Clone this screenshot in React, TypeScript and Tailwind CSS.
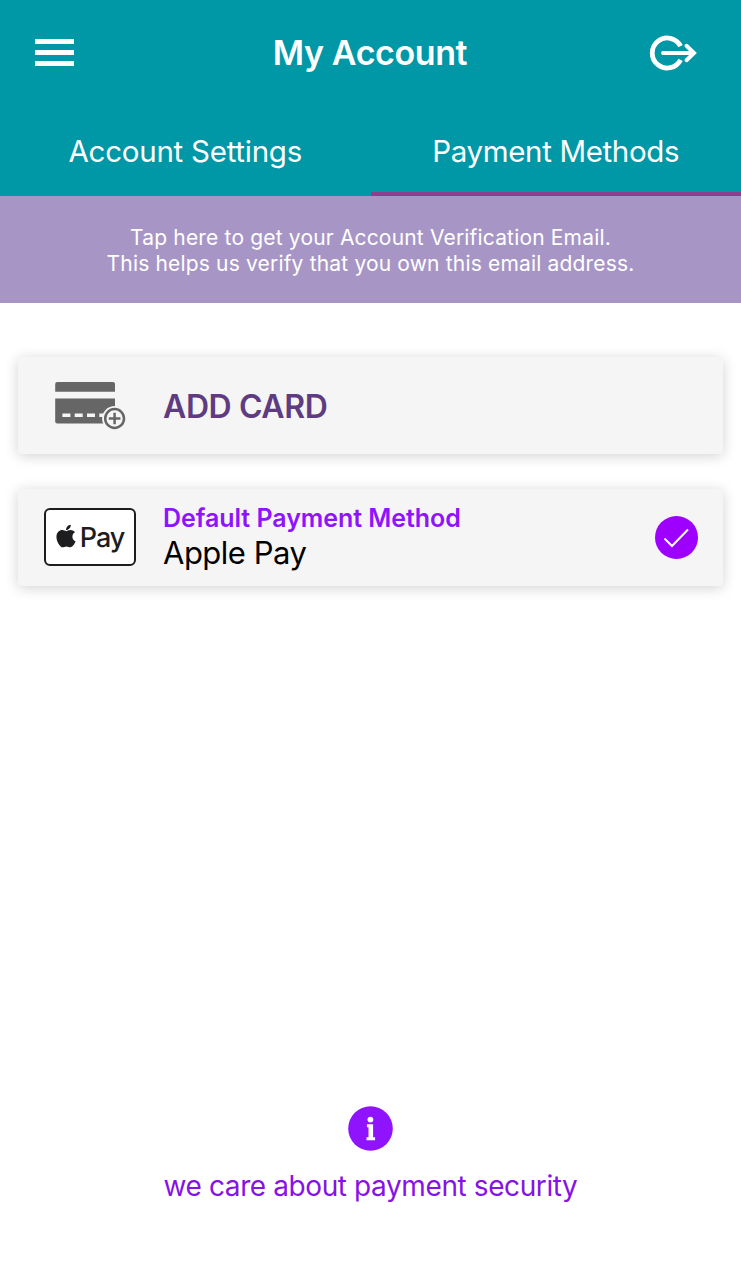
import { useState } from 'react'
import type { ReactNode } from 'react'
import { FaApple } from 'react-icons/fa'

type Tab = 'settings' | 'payment'

const tabs: { id: Tab; label: string; text: string }[] = [
  { id: 'settings', label: 'Account Settings', text: 'tracking-[-0.25px]' },
  { id: 'payment', label: 'Payment Methods', text: 'tracking-[-0.35px]' },
]

export default function App() {
  const [active, setActive] = useState<Tab>('payment')

  return (
    <div className="flex h-[1280px] w-[741px] flex-col bg-white font-['Inter',sans-serif]">
      <header className="h-[196px] bg-[#0097a7] text-white">
        <div className="flex h-[106px] items-center pl-[35px] pr-[44px]">
          <div className="flex flex-1 pb-px">
            <button type="button" aria-label="Menu" className="flex w-[39px] flex-col gap-[6px]">
              <span className="h-[5px] bg-white" />
              <span className="h-[5px] bg-white" />
              <span className="h-[5px] bg-white" />
            </button>
          </div>
          <h1 className="pl-[8px] text-[34px] font-semibold leading-none tracking-[-0.4px]">
            My Account
          </h1>
          <div className="flex flex-1 justify-end">
            <button type="button" aria-label="Log out">
              <LogoutIcon />
            </button>
          </div>
        </div>
        <nav className="flex h-[90px]">
          {tabs.map((t) => (
            <button
              key={t.id}
              type="button"
              onClick={() => setActive(t.id)}
              className={`h-full flex-1 border-b-4 pt-[3px] text-[29.5px] leading-[30px] ${t.text} ${
                active === t.id ? 'border-[#8e3d8f]' : 'border-transparent'
              }`}
            >
              {t.label}
            </button>
          ))}
        </nav>
      </header>

      <button
        type="button"
        className="flex h-[107px] flex-col items-center justify-center bg-[#a796c5] pt-[2px] text-[21px] leading-[26px] tracking-[0.17px] text-white"
      >
        <span>Tap here to get your Account Verification Email.</span>
        <span>This helps us verify that you own this email address.</span>
      </button>

      <main className="flex flex-col gap-[35px] px-[18px] pt-[54px]">
        <Card icon={<AddCardIcon />}>
          <span className="pt-[2px] text-[32px] font-semibold leading-none tracking-[-0.4px] text-[#5f3b82]">
            ADD CARD
          </span>
        </Card>
        <Card icon={<ApplePayMark />} action={<CheckIcon />}>
          <span className="text-[25px] font-semibold leading-[30px] tracking-[-0.05px] text-[#8f13fd]">
            Default Payment Method
          </span>
          <span className="text-[31px] leading-[40px] tracking-[-0.5px] text-black">Apple Pay</span>
        </Card>
      </main>

      <footer className="mt-auto flex flex-col items-center pb-[75px] text-[#8f13fd]">
        <InfoIcon />
        <p className="mt-[16px] text-[28px] leading-[38px] tracking-[-0.4px] text-[#8612e6]">
          we care about payment security
        </p>
      </footer>
    </div>
  )
}

function Card({
  icon,
  action,
  children,
}: {
  icon: ReactNode
  action?: ReactNode
  children: ReactNode
}) {
  return (
    <div className="flex h-[97px] items-center rounded-[4px] bg-[#f5f5f5] pr-[25px] shadow-[0_2px_14px_rgba(0,0,0,0.18)]">
      <div className="flex w-[145px] pl-[26px]">{icon}</div>
      <div className="flex flex-1 flex-col">{children}</div>
      {action}
    </div>
  )
}

function LogoutIcon() {
  return (
    <svg width="48" height="36" viewBox="0 0 48 36" fill="none" stroke="white">
      <path d="M31.6 11.2A15 15 0 1 0 31.6 24.8" strokeWidth="4.8" />
      <path d="M14 18H44" strokeWidth="3.8" strokeLinecap="round" />
      <path d="M37.5 10.8L45 18L37.5 25.2" strokeWidth="4" strokeLinecap="round" />
    </svg>
  )
}

function AddCardIcon() {
  return (
    <svg width="84" height="51" viewBox="0 0 84 51">
      <path d="M13.2 2H69Q71 2 71 4V11.8H11.2V4Q11.2 2 13.2 2Z" fill="#666" />
      <path d="M11.2 18.5H71V43.5H13.2Q11.2 43.5 11.2 41.5Z" fill="#666" />
      <path d="M18.4 35.2H61" stroke="#f5f5f5" strokeWidth="3.6" strokeDasharray="8 4.3" />
      <circle cx="70.6" cy="38.5" r="12.5" fill="#f5f5f5" />
      <circle cx="70.6" cy="38.5" r="9.4" fill="none" stroke="#666" strokeWidth="2.5" />
      <path d="M64.8 38.5H76.4M70.6 32.7V44.3" stroke="#666" strokeWidth="2.5" />
    </svg>
  )
}

function ApplePayMark() {
  return (
    <div className="mb-px flex h-[58px] w-[92px] items-center justify-center rounded-[6px] border-2 border-[#1d1d1f] bg-white pr-[3px] text-[#1d1d1f]">
      <FaApple className="mb-[3px] mr-px size-[26px]" />
      <span className="text-[27px] font-medium leading-none tracking-[-1px]">Pay</span>
    </div>
  )
}

function CheckIcon() {
  return (
    <svg width="43" height="43" viewBox="0 0 43 43" fill="none">
      <circle cx="21.5" cy="21.5" r="21.5" fill="#9d00ff" />
      <path d="M9.5 22.5L17 30L33 13.5" stroke="white" strokeWidth="2" />
    </svg>
  )
}

function InfoIcon() {
  return (
    <svg width="45" height="45" viewBox="0 0 45 45">
      <circle cx="22.5" cy="22.5" r="22.3" fill="#8f13fd" />
      <circle cx="22.4" cy="13.6" r="2.9" fill="white" />
      <path d="M18.9 18.2H25.1V31.2H27.1V34.2H18.5V31.2H20.5V21.2H18.9Z" fill="white" />
    </svg>
  )
}
